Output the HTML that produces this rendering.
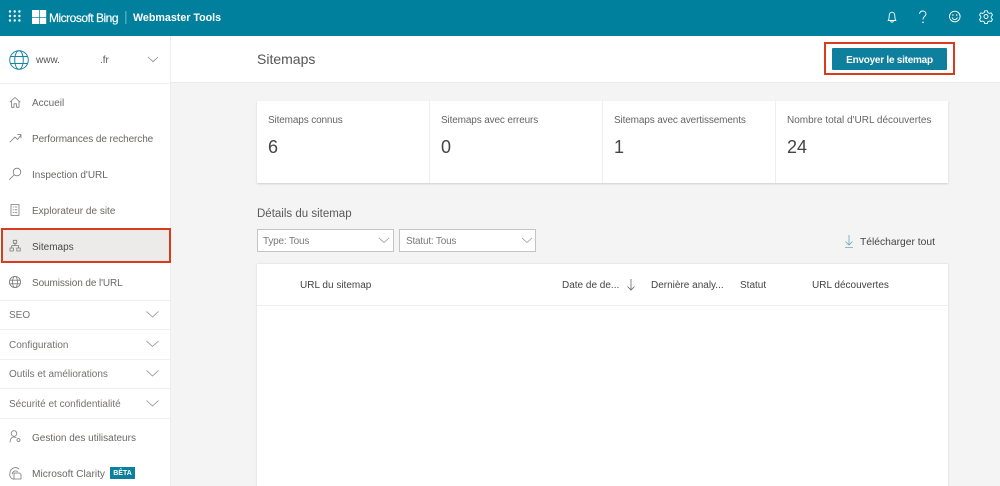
<!DOCTYPE html>
<html lang="fr"><head><meta charset="utf-8"><title>Sitemaps</title>
<style>
*{box-sizing:border-box}
html,body{margin:0;padding:0;width:1000px;height:486px;overflow:hidden;background:#f4f4f4;font-family:"Liberation Sans",sans-serif;color:#505050}
.a{position:absolute;white-space:nowrap}
svg{position:absolute;overflow:visible;fill:none}
.n{font-size:10px;line-height:14px;color:#6a6866}
.g{font-size:10px;line-height:14px;color:#747270}
.sep{position:absolute;left:0;width:170px;height:1px;background:#f0f0f0}
.ic{stroke:#7a7a7a;stroke-width:.8}
.ch{stroke:#8a8a8a;stroke-width:.8}
.lab{font-size:10px;line-height:14px;color:#666}
.num{font-size:18px;line-height:22px;color:#444}
.th{font-size:10px;line-height:14px;color:#444}
</style></head><body>
<div class="a" style="left:0;top:0;width:1000px;height:36px;background:#00809d"></div>
<svg style="left:0;top:0" width="1000" height="36">
<g fill="#fff"><circle cx="10" cy="11.500" r="1.200"/><circle cx="14.700" cy="11.500" r="1.200"/><circle cx="19.400" cy="11.500" r="1.200"/><circle cx="10" cy="16" r="1.200"/><circle cx="14.700" cy="16" r="1.200"/><circle cx="19.400" cy="16" r="1.200"/><circle cx="10" cy="20.500" r="1.200"/><circle cx="14.700" cy="20.500" r="1.200"/><circle cx="19.400" cy="20.500" r="1.200"/>
<rect x="32" y="10" width="7" height="7"/><rect x="39.700" y="10" width="6.500" height="7"/><rect x="32" y="17.700" width="7" height="6.300"/><rect x="39.700" y="17.700" width="6.500" height="6.300"/>
<rect x="125.500" y="11" width=".8" height="13" opacity=".6"/></g>
<g stroke="#fff" stroke-width=".9" stroke-linecap="round" stroke-linejoin="round">
<path d="M888 20.500c1.300-1 1-3 1.200-5 .2-2 1.400-3.300 2.800-3.300s2.600 1.300 2.800 3.300c.2 2-.1 4 1.200 5zM890.600 20.800c.2 1 .7 1.400 1.400 1.400s1.200-.4 1.400-1.400"/>
<path d="M919.600 13.500c.3-1.600 1.600-2.500 3.200-2.500 1.800 0 3.200 1.200 3.200 2.900 0 2.500-3 2.500-3 5.300"/>
<circle cx="923" cy="22.300" r=".35"/>
<circle cx="954.800" cy="16.500" r="5.300"/><path d="M952.300 17.800c.6 1.300 1.500 1.800 2.500 1.800s1.900-.5 2.500-1.800"/>
<circle cx="952.900" cy="15" r=".3"/><circle cx="956.700" cy="15" r=".3"/>
<circle cx="986" cy="16.500" r="2"/>
<path d="M984.700 10.800h2.600l.5 1.800 1.600.8 1.800-.6 1.300 2.200-1.300 1.400v1.600l1.300 1.400-1.300 2.200-1.800-.6-1.600.8-.5 1.800h-2.600l-.5-1.800-1.600-.8-1.800.6-1.300-2.200 1.300-1.400v-1.600l-1.300-1.400 1.300-2.200 1.800.6 1.600-.8z"/>
</g></svg>
<div class="a" style="left:49px;top:10px;font-size:12px;line-height:16px;color:#fff;letter-spacing:-.5px;-webkit-text-stroke:.15px #fff">Microsoft Bing</div>
<div class="a" style="left:133px;top:10px;font-size:10.700px;line-height:16px;color:#fff;font-weight:bold">Webmaster Tools</div>

<div class="a" style="left:0;top:36px;width:171px;height:450px;background:#fff;border-right:1px solid #ededed"></div>
<div class="a" style="left:171px;top:36px;width:829px;height:47px;background:#fff;border-bottom:1px solid #e9e9e9"></div>
<div class="sep" style="top:83px"></div>

<svg style="left:0;top:36px" width="171" height="47">
<g stroke="#1a86a2" stroke-width="1"><circle cx="19" cy="24" r="9.300"/><ellipse cx="19" cy="24" rx="4.300" ry="9.300"/><path d="M10.500 20.500h17M10.500 27.500h17"/></g>
<path class="ch" d="M148 21l5 4.700 5-4.700"/></svg>
<div class="a" style="left:36px;top:54px;font-size:10px;line-height:14px;color:#555">www.</div>
<div class="a" style="left:100px;top:54px;font-size:10px;line-height:14px;color:#555">.fr</div>

<div class="a" style="left:1px;top:228px;width:170px;height:35px;background:#edebe9;border:2px solid #d83b1d"></div>

<svg style="left:0;top:0" width="171" height="486"><g class="ic" stroke-linejoin="round" stroke-linecap="round">
<path d="M10 102l5-4.500 5 4.500M11.500 101v6.300h2.500v-3.500h2.500v3.500h2.500V101"/>
<path d="M10 142l5-5 2.500 2.500L21 135M17.500 134.500H21V138"/>
<circle cx="17" cy="172" r="3.800"/><path d="M14 175l-4.500 4.500"/>
<rect x="11" y="204.500" width="8" height="11"/><path d="M13 207h.5M15 207h2M13 209.800h.5M15 209.800h2M13 212.500h.5M15 212.500h2"/>
<rect x="13.300" y="240.300" width="3.400" height="3"/><rect x="10" y="248" width="3.400" height="3"/><rect x="16.800" y="248" width="3.400" height="3"/><path d="M15 243.300v2.300M11.700 248v-2.400h6.800v2.400"/>
<circle cx="15" cy="282" r="5.600"/><ellipse cx="15" cy="282" rx="2.500" ry="5.600"/><path d="M9.800 280.200h10.400M9.800 283.800h10.400"/>
<circle cx="14" cy="433.500" r="2.800"/><path d="M10 442c.3-3.200 1.800-5 4-5 .9 0 1.600.2 2.200.7"/><circle cx="18.500" cy="440" r="1.500"/>
<path d="M10 474a5.500 5.500 0 0 1 9-5M12.500 474a3 3 0 0 1 5-2.300"/><path d="M14 473h5.500l1.500 1.500v4.500h-7z"/><path d="M9.500 474.500a5.800 5.800 0 0 0 4 4.800"/>
</g>
<g class="ch"><path d="M146.500 311.500l6 5.500 6-5.500M146.500 341l6 5.500 6-5.500M146.500 370.500l6 5.500 6-5.500M146.500 400.500l6 5.500 6-5.500"/></g></svg>

<div class="a n" style="left:32px;top:97px">Accueil</div>
<div class="a n" style="left:32px;top:133px;letter-spacing:-.09px">Performances de recherche</div>
<div class="a n" style="left:32px;top:169px">Inspection d'URL</div>
<div class="a n" style="left:32px;top:205px">Explorateur de site</div>
<div class="a n" style="left:32px;top:241px;color:#4a4a4a">Sitemaps</div>
<div class="a n" style="left:32px;top:277px;letter-spacing:-.1px">Soumission de l'URL</div>
<div class="sep" style="top:300px"></div>
<div class="a g" style="left:9px;top:309px">SEO</div>
<div class="sep" style="top:329px"></div>
<div class="a g" style="left:9px;top:339px">Configuration</div>
<div class="sep" style="top:359px"></div>
<div class="a g" style="left:9px;top:368px">Outils et améliorations</div>
<div class="sep" style="top:388px"></div>
<div class="a g" style="left:9px;top:398px">Sécurité et confidentialité</div>
<div class="sep" style="top:418px"></div>
<div class="a n" style="left:32px;top:432px">Gestion des utilisateurs</div>
<div class="a n" style="left:32px;top:468px;font-size:10.200px">Microsoft Clarity</div>
<div class="a" style="left:110px;top:467px;width:25px;height:12px;background:#0e7f9c;color:#fff;font-size:7px;font-weight:bold;line-height:13px;text-align:center">BÊTA</div>

<div class="a" style="left:257px;top:50px;font-size:14px;line-height:18px;color:#555">Sitemaps</div>
<div class="a" style="left:824px;top:42px;width:131px;height:33px;border:2px solid #d83b1d;background:#fff"></div>
<div class="a" style="left:832px;top:48px;width:115px;height:22px;background:#0e7f9c;border-radius:1px;color:#fff;font-size:10px;letter-spacing:-.25px;font-weight:bold;line-height:23px;text-align:center;padding-top:1px">Envoyer le sitemap</div>

<div class="a" style="left:257px;top:101px;width:691px;height:82px;background:#fff;box-shadow:0 1px 2px rgba(0,0,0,.16)"></div>
<div class="a" style="left:429px;top:101px;width:1px;height:82px;background:#eee"></div>
<div class="a" style="left:602px;top:101px;width:1px;height:82px;background:#eee"></div>
<div class="a" style="left:775px;top:101px;width:1px;height:82px;background:#eee"></div>
<div class="a lab" style="left:268px;top:114px;letter-spacing:-.14px">Sitemaps connus</div>
<div class="a lab" style="left:441px;top:114px;letter-spacing:-.14px">Sitemaps avec erreurs</div>
<div class="a lab" style="left:614px;top:114px;letter-spacing:-.14px">Sitemaps avec avertissements</div>
<div class="a lab" style="left:787px;top:114px">Nombre total d'URL découvertes</div>
<div class="a num" style="left:268px;top:136px">6</div>
<div class="a num" style="left:441px;top:136px">0</div>
<div class="a num" style="left:614px;top:136px">1</div>
<div class="a num" style="left:787px;top:136px">24</div>

<div class="a" style="left:257px;top:206px;font-size:11.500px;line-height:16px;color:#5a5a5a">Détails du sitemap</div>
<div class="a" style="left:257px;top:229px;width:137px;height:23px;background:#fff;border:1px solid #c4c4c4;font-size:10px;letter-spacing:-.2px;line-height:23px;padding-left:5px;color:#7a7a7a">Type: Tous</div>
<div class="a" style="left:399px;top:229px;width:137px;height:23px;background:#fff;border:1px solid #c4c4c4;font-size:10px;letter-spacing:-.2px;line-height:23px;padding-left:6px;color:#7a7a7a">Statut: Tous</div>
<div class="a" style="left:860px;top:236px;font-size:10.300px;line-height:14px;color:#444">Télécharger tout</div>

<div class="a" style="left:257px;top:264px;width:691px;height:222px;background:#fff;box-shadow:0 0 2px rgba(0,0,0,.14)"></div>
<div class="a" style="left:257px;top:305px;width:691px;height:1px;background:#eee"></div>
<div class="a th" style="left:300px;top:279px">URL du sitemap</div>
<div class="a th" style="left:562px;top:279px">Date de de...</div>
<div class="a th" style="left:651px;top:279px">Dernière analy...</div>
<div class="a th" style="left:740px;top:279px">Statut</div>
<div class="a th" style="left:812px;top:279px">URL découvertes</div>
<svg style="left:0;top:0" width="1000" height="486">
<path stroke="#999" stroke-width=".8" d="M379 238l5 4.500 5-4.500M522 238l5 4.500 5-4.500"/>
<path stroke="#6ba5b8" stroke-width=".8" d="M849 235v10M845.500 241.500l3.500 3.500 3.500-3.500M845 247.500h8"/>
<path stroke="#666" stroke-width=".8" d="M631 279v11M627.500 286.500l3.500 3.500 3.500-3.500"/>
</svg>
</body></html>
